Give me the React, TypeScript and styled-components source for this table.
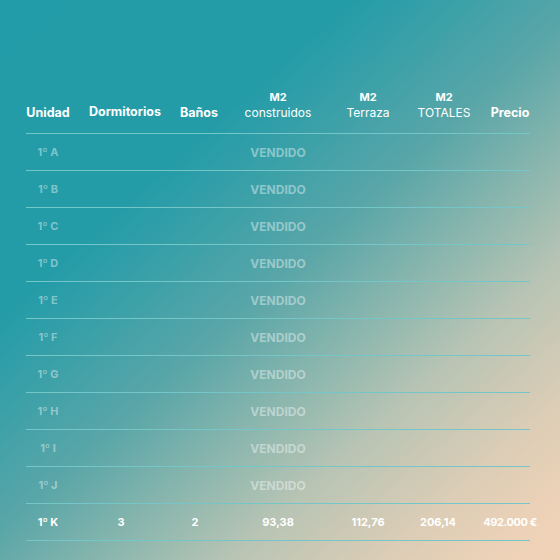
import styled, { createGlobalStyle } from "styled-components";

const GlobalStyle = createGlobalStyle`
  html, body {
    margin: 0;
    padding: 0;
  }
  body {
    font-family: Inter, "Noto Sans", "DejaVu Sans", sans-serif;
  }
`;

const Page = styled.div`
  width: 560px;
  height: 560px;
  overflow: hidden;
  background: linear-gradient(
    138deg,
    #229ca8 0%,
    #249ca8 30%,
    #3ea1a8 40%,
    #5aa6a8 50%,
    #8db7ae 62%,
    #b8c4b4 72%,
    #dccdb6 85%,
    #eed2b7 95%,
    #f0d2b6 100%
  );
  padding-top: 88px;
  box-sizing: border-box;
`;

const Table = styled.div`
  margin-left: 26px;
  width: 504px;
`;

const columns = "44px 110px 38px 120px 60px 92px 40px";

const HeaderRow = styled.div`
  display: grid;
  grid-template-columns: ${columns};
  align-items: end;
  height: 44px;
  padding-bottom: 1px;
  border-bottom: 1px solid #74c6c8;
`;

const HeadCell = styled.div<{ $raised?: boolean }>`
  display: flex;
  flex-direction: column;
  align-items: center;
  justify-content: flex-end;
  color: #ffffff;
  font-size: 12.5px;
  font-weight: 700;
  line-height: 15px;
  white-space: nowrap;
  padding-bottom: ${(p) => (p.$raised ? 13 : 12)}px;
`;

const HeadTop = styled.span`
  font-weight: 700;
  font-size: 11px;
`;

const HeadSub = styled.span`
  font-weight: 400;
  font-size: 12px;
`;

const Row = styled.div`
  display: grid;
  grid-template-columns: ${columns};
  align-items: center;
  height: 36px;
  border-bottom: 1px solid #74c6c8;
`;

const Cell = styled.div<{ $sold?: boolean; $shift?: number }>`
  display: flex;
  justify-content: center;
  color: ${(p) => (p.$sold ? "rgba(255, 255, 255, 0.42)" : "#ffffff")};
  font-size: 11px;
  font-weight: 700;
  white-space: nowrap;
  transform: translateX(${(p) => p.$shift ?? 0}px);
`;

const SoldCell = styled(Cell)`
  grid-column: 4 / 5;
  font-size: 12px;
`;

const PriceCell = styled(Cell)`
  letter-spacing: -0.4px;
`;

const sold = ["A", "B", "C", "D", "E", "F", "G", "H", "I", "J"];

export default function App() {
  return (
    <Page>
      <GlobalStyle />
      <Table>
        <HeaderRow>
          <HeadCell>Unidad</HeadCell>
          <HeadCell $raised>Dormitorios</HeadCell>
          <HeadCell>Baños</HeadCell>
          <HeadCell>
            <HeadTop>M2</HeadTop>
            <HeadSub>construidos</HeadSub>
          </HeadCell>
          <HeadCell>
            <HeadTop>M2</HeadTop>
            <HeadSub>Terraza</HeadSub>
          </HeadCell>
          <HeadCell>
            <HeadTop>M2</HeadTop>
            <HeadSub>TOTALES</HeadSub>
          </HeadCell>
          <HeadCell>Precio</HeadCell>
        </HeaderRow>
        {sold.map((u) => (
          <Row key={u}>
            <Cell $sold>1º {u}</Cell>
            <SoldCell $sold>VENDIDO</SoldCell>
          </Row>
        ))}
        <Row>
          <Cell>1º K</Cell>
          <Cell $shift={-4}>3</Cell>
          <Cell $shift={-4}>2</Cell>
          <Cell>93,38</Cell>
          <Cell>112,76</Cell>
          <Cell $shift={-6}>206,14</Cell>
          <PriceCell>492.000 €</PriceCell>
        </Row>
      </Table>
    </Page>
  );
}
